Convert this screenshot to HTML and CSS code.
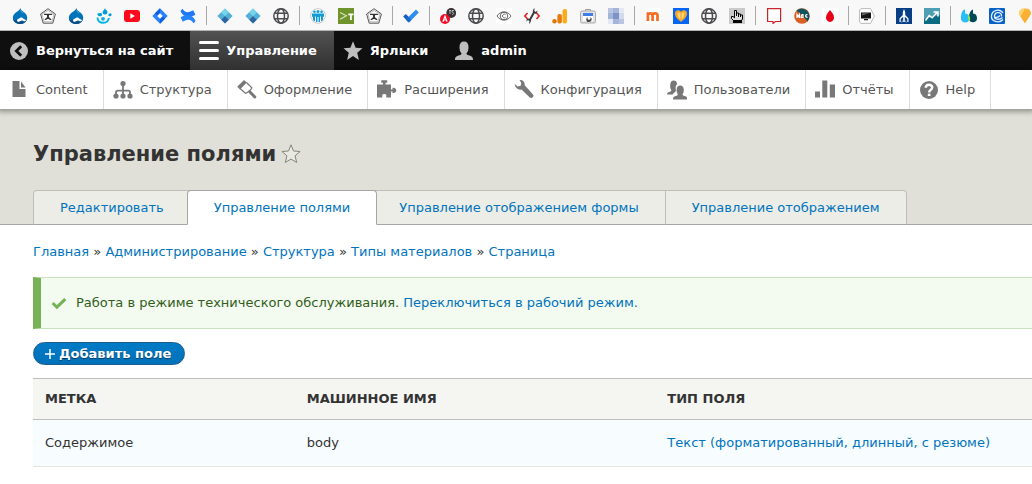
FILE: index.html
```html
<!DOCTYPE html>
<html lang="ru">
<head>
<meta charset="utf-8">
<title>Управление полями</title>
<link rel="stylesheet" href="styles.css">
</head>
<body>
<svg class="defs" aria-hidden="true">
  <defs>
    <symbol id="drop" viewBox="0 0 16 16">
      <path fill="#0073ba" d="M8.200 0C8.700 2.200 10.600 3 12.400 4.400 14.300 5.900 15.300 7.700 15.200 9.800 15 13.400 12 16 8 16 3.900 16 .900 13.300.900 9.700c0-2.200 1.200-4 3.200-5.400C6 3 7.700 2.200 8.200 0z"/>
      <path fill="#0b4f86" d="M1 10.500c1.500 2 3.500 2 5.500.5 2-1.300 4-1 5.500.5 1.500 1.200 2.300.5 3-1.500-.6 4-3 6-7 6s-6.400-2.500-7-5.500z"/>
      <path fill="#fff" d="M7 10.500c2-1.700 3.300-.8 4.500.2 1.200.9 2.200.6 2.300 1.300.1 1.400-1.300 1.700-2.600.9-1-.6-1.600-.6-2.700.2C7 14.200 5 13.800 5 12.400c0-.9.900-1.200 2-1.900z"/>
      <path fill="#5fb3e4" d="M8.300 1.500c.5 2 2.700 2.600 4 3.900-2-.2-4-1.300-4-3.900z"/>
    </symbol>
    <symbol id="drop-ring" viewBox="0 0 16 16">
      <g fill="#009cde"><path d="M9 0c.3 1.800 2.500 2.300 2.500 4.200A2.500 2.500 0 0 1 9 6.600C7.500 6.600 6.600 5.600 6.600 4.300 6.600 2.500 8.600 1.900 9 0z"/><path d="M1 5.500C2.600 6 4 4.300 5.500 5.300c.8.800.8 1.800.1 2.400-1 .8-2.500.7-3.400 0C1.300 7 2 6.300 1 5.500z"/><path d="M14.800 5c.3.700 1.200 1.600.6 2.600-.6.900-2 .9-2.700.2-.6-.7-.4-1.700.5-2 .8-.2 1.200-.3 1.600-.8z"/></g>
      <path fill="none" stroke="#00b4e3" stroke-width="2" d="M1.500 9.500c0 3.300 2.600 5.300 5.600 5.300 2.900 0 5.400-1.600 5.700-4.800"/>
      <circle cx="7" cy="10.800" r="1.900" fill="#12a9e0"/>
    </symbol>
    <symbol id="pentagon" viewBox="0 0 16 16">
      <path fill="#fff" stroke="#444" stroke-width=".9" stroke-linejoin="round" d="M8 .7 15.400 6 12.800 15.200H3.200L.600 6z"/>
      <path fill="none" stroke="#888" stroke-width=".6" d="M2 6 8 2.500 14 6l-2 7.800H4z"/>
      <path fill="#333" d="M4 5.800h8.200v1.100H9.300c-.6 1-.6 2 .2 2.900.9.900 1.700 1.300 2 2.200H9.900c-.4-.6-1-1-1.900-1s-1.500.4-1.900 1H4.500c.3-.9 1.100-1.300 2-2.200.8-.9.800-1.900.2-2.900H4z"/>
    </symbol>
    <symbol id="globe" viewBox="0 0 16 16">
      <g fill="none" stroke="#4c4c4f" stroke-width="1.500"><circle cx="8" cy="8" r="7.200"/><ellipse cx="8" cy="8" rx="3.500" ry="7.200"/><path d="M1.500 5.300h13M1.500 10.700h13"/></g>
    </symbol>
    <symbol id="diamond" viewBox="0 0 16 16">
      <path fill="#65c8e4" d="M8 .5 15.500 8 8 15.500.500 8z"/><path fill="#4d9fce" d="M11.800 4.200 15.500 8l-3.700 3.800L8 8zM4.200 4.200 8 8l-3.800 3.800L.500 8z" opacity=".6"/><path fill="#77d5ea" d="m8 .5 3.800 3.700L8 8 4.200 4.200z"/><path fill="#2e66a3" d="m8 8 3.800 3.800L8 15.500l-3.800-3.700z"/>
    </symbol>
  </defs>
</svg>

<nav class="bookmarks" aria-label="Закладки">
  <a href="#" aria-label="Drupal"><svg><use href="#drop"/></svg></a>
  <a href="#" aria-label="Форж"><svg><use href="#pentagon"/></svg></a>
  <a href="#" aria-label="Drupal.org"><svg><use href="#drop"/></svg></a>
  <a href="#" aria-label="Drupal 8"><svg><use href="#drop-ring"/></svg></a>
  <a href="#" aria-label="YouTube"><svg viewBox="0 0 16 16"><rect y="2" width="16" height="12" rx="3" fill="#ff0a1c"/><path fill="#fff" d="m6.300 5.300 4.600 2.700-4.600 2.700z"/></svg></a>
  <a href="#" aria-label="Jira"><svg viewBox="0 0 16 16"><path fill="#2684ff" d="m8 .3 7.700 7.700L8 15.700.300 8z"/><path fill="#0f5fe0" d="M8 .3v5L5.300 8 2.800 5.500zM8 15.700v-5L10.700 8l2.500 2.500z"/><path fill="#fff" d="M8 5.200 10.800 8 8 10.800 5.200 8z"/></svg></a>
  <a href="#" aria-label="Confluence"><svg viewBox="0 0 16 16"><path fill="#1f78fb" d="M2.500.7c2.500 4 5 4.600 10.700 1.600l2.200 4.500C8 11 3.500 9 .5 3.300c.4-1 1.100-2 2-2.600z"/><path fill="#2684ff" d="M13.500 15.300c-2.500-4-5-4.600-10.700-1.600L.6 9.200C8 5 12.500 7 15.500 12.700c-.4 1-1.100 2-2 2.600z"/></svg></a>
  <span class="sep"></span>
  <a href="#" aria-label="Проект"><svg><use href="#diamond"/></svg></a>
  <a href="#" aria-label="Проект 2"><svg><use href="#diamond"/></svg></a>
  <a href="#" aria-label="Сайт"><svg><use href="#globe"/></svg></a>
  <span class="sep"></span>
  <a href="#" aria-label="Команда"><svg viewBox="0 0 16 16"><path fill="#fff" stroke="#bbb" stroke-width=".8" d="M4 1.500 8 .6l4 .9L15 5l.3 4L12.500 14 8 15.400 3.500 14 .700 9 1 5z"/><g fill="#109bd3"><circle cx="8" cy="3.400" r="1.500"/><circle cx="4.500" cy="3.800" r="1.300"/><circle cx="11.500" cy="3.800" r="1.300"/><path d="M2 5.500h12v3l-1 .5v3l-2 1.500V8.500h-1V14H8.500V9h-1v5H6V8.500H5v5L3 12V9l-1-.5z"/></g></svg></a>
  <a href="#" aria-label="Терминал"><svg viewBox="0 0 16 16"><path fill="#70942c" d="M0 0h16v16H0z"/><path fill="none" stroke="#dbe6bd" stroke-width="1.100" d="m2 4.500 6.500 3.200L2 11.300"/><path fill="#fff" d="M10.300 5.500h5.200v1.700H13.800V12H12V7.200h-1.700z"/></svg></a>
  <a href="#" aria-label="Форж 2"><svg><use href="#pentagon"/></svg></a>
  <span class="sep"></span>
  <a href="#" aria-label="Задачи"><svg viewBox="0 0 16 16"><path fill="#195abd" d="m.200 8.500 2.600-2.600 5 5L5.300 14.300z"/><path fill="#2f8eed" d="M2.800 11.500 13 1.600l2.800 2.800L6 14.400z"/><path fill="#1868cd" d="m2.800 11.500 2.500-2.400 3 2.900L6 14.400z"/></svg></a>
  <span class="sep"></span>
  <a href="#" aria-label="Метрика"><svg viewBox="0 0 16 16"><circle cx="11.200" cy="5" r="4.900" fill="#333"/><circle cx="5" cy="11" r="5" fill="#f30b25"/><path fill="none" stroke="#fff" stroke-width="1.200" d="M2.900 13.700 5 8.200l2.100 5.500M3.600 12h2.800"/><path fill="none" stroke="#bbb" d="M9 2.500h2M10 2.500V6M14 2.500h-2v1.700c2-.4 2.500 2.500 0 2.300"/></svg></a>
  <a href="#" aria-label="Сайт 2"><svg><use href="#globe"/></svg></a>
  <a href="#" aria-label="Копирайт"><svg viewBox="0 0 16 16"><path fill="#fff" d="M0 0h16v16H0z"/><g fill="none" stroke="#555" stroke-width=".9"><path d="M1 8c3.500-5.500 10.500-5.500 14 0-3.500 5.500-10.500 5.500-14 0z"/><circle cx="8" cy="8" r="3.800"/><path d="M9.500 6.700c-1.400-1.200-3-.3-3 1.300s1.600 2.500 3 1.300"/></g></svg></a>
  <a href="#" aria-label="Инструменты"><svg viewBox="0 0 16 16"><path fill="none" stroke="#e2202e" stroke-width="1.600" d="M3.500 5 .9 8l2.600 3M12.500 5l2.600 3-2.600 3"/><path fill="none" stroke="#3a3a3a" stroke-width="2" d="m5.500 12.500 5-9"/><path fill="#3a3a3a" d="m10.700.300-.5 2.700 1.600 1 1.500-1.400c.3 2-.8 3.400-2.100 3.100L8.900 4C8.800 2 9.400.800 10.700.300zM5 15.800l.5-2.700-1.500-1-1.500 1.400c-.2-2 .8-3.300 2-3.100l2.400 1.700c.2 1.900-.6 3.100-1.900 3.700z"/></svg></a>
  <a href="#" aria-label="Аналитика"><svg viewBox="0 0 16 16"><rect x="10.500" y="1" width="4.500" height="14.500" rx="2" fill="#fbac18"/><rect x="5.400" y="6" width="4.500" height="9.500" rx="2" fill="#e87b0b"/><circle cx="2.500" cy="13.200" r="2.200" fill="#e37400"/></svg></a>
  <a href="#" aria-label="Консоль"><svg viewBox="0 0 16 16"><path fill="none" stroke="#999" d="M5.500 3V1.500h5V3"/><rect x=".5" y="3" width="15" height="12" rx="1.500" fill="#e2e2e2" stroke="#aaa"/><path fill="#3f7ee8" d="M3 5h10v3H3z"/><path fill="#fff" d="M3 8h10v5H3z"/><path fill="#444" d="M7.500 9v2l1.500 1 1.500-1V9c2 1.500 1.500 4.500-1.500 5S5.500 10.500 7.500 9z"/></svg></a>
  <a href="#" aria-label="Пиксели"><svg viewBox="0 0 16 16"><path fill="#d3daeb" d="M0 0h16v16H0z"/><path fill="#a5b5d9" d="M5 0h6v5H5zM0 5h5v6H0zM5 11h6v5H5z"/><path fill="#b9c5e1" d="M0 0h5v5H0zM11 11h5v5h-5z"/><path fill="#7d95c6" d="M5 5h6v6H5z"/><path fill="#e3e8f3" d="M11 0h5v5h-5zM0 11h5v5H0z"/></svg></a>
  <span class="sep"></span>
  <a href="#" aria-label="Miro"><svg viewBox="0 0 16 16"><rect width="16" height="16" rx="2" fill="#fff"/><path fill="none" stroke="#f76b22" stroke-width="2.700" d="M2.900 13V4.300M2.900 7c0-2 4.700-2.300 4.700 0v6M7.600 7c0-2 4.900-2.300 4.900 0v6"/></svg></a>
  <a href="#" aria-label="Избранное"><svg viewBox="0 0 16 16"><path fill="#0464f3" d="M0 0h16v16H0z"/><path fill="#f4a82b" d="M8 14C5 11.500 2 9 2 5.500c0-3.300 4-4.300 6-1.600 2-2.700 6-1.700 6 1.600C14 9 11 11.500 8 14z"/><path fill="#fdd868" d="M8 12C6 10.500 4.500 8 4.500 5.500 5.800 4 7.500 4.300 8 5.500c.5-1.200 2.200-1.500 3.500 0C11.500 8 10 10.500 8 12z"/><path stroke="#eb8040" d="M8 4.500V12" stroke-width=".7"/></svg></a>
  <a href="#" aria-label="Сайт 3"><svg><use href="#globe"/></svg></a>
  <a href="#" aria-label="Курсор"><svg viewBox="0 0 16 16"><path fill="#cacaca" d="M0 0h16v16H0z"/><path fill="#ddd" stroke="#000" d="M4.500 12.500 2.500 10.500V8.500H4l1.500 1.300V2.500h2V5h2v1h2v1h2v4l-1 1.500z"/><path fill="#000" d="M4 12h9v3H4zM7 4.500h1V8H7zM9 5.500h1V9H9zM11 6.500h1V9h-1z"/></svg></a>
  <span class="sep"></span>
  <a href="#" aria-label="Сообщения"><svg viewBox="0 0 16 16"><path fill="#fff" stroke="#ca252c" stroke-width="1.200" d="M1.600.700h13V13.500H9.500L7 15.500V13.500H1.600z"/></svg></a>
  <a href="#" aria-label="МДС"><svg viewBox="0 0 16 16"><circle cx="8" cy="8" r="7.800" fill="#d95f25"/><path fill="#0e535f" d="M2.500 2.400a7.800 7.800 0 0 1 11 11L9 8z"/><path fill="none" stroke="#fff" stroke-width="1.200" d="M3 10V6.500l1.200 2 1.200-2V10M7 9l1-2.500h1V9M6.500 9.500h3M13.500 6.800c-2-1-3 2.400 0 2.500"/></svg></a>
  <a href="#" aria-label="Капля"><svg viewBox="0 0 16 16"><rect width="16" height="16" rx="2" fill="#fff"/><path fill="#e90014" d="M8 2c2.600 3 4 5.300 4 7.500S10.500 14 8 14s-4-2.300-4-4.500S5.400 5 8 2z"/></svg></a>
  <span class="sep"></span>
  <a href="#" aria-label="Экран"><svg viewBox="0 0 16 16"><path fill="#fff" stroke="#aaa" stroke-width=".8" d="M2 .6h9.500L15.400 8l-3.900 7.400H2L.600 14V2z"/><path fill="#161616" d="M2 4.500h10v6H2zM5 11h4v1.200H5z"/><path fill="#666" d="M3 5.300h7L3 7.500z"/></svg></a>
  <span class="sep"></span>
  <a href="#" aria-label="Башня"><svg viewBox="0 0 16 16"><path fill="#073f86" d="M0 0h16v16H0z"/><path fill="#fff" d="m8 1 1.200 3v3l3.300 3.500V14h-1.200v-3L8.800 8.800V14H7.200V8.800L4.700 11v3H3.500v-3.500L6.800 7V4z"/><path fill="none" stroke="#cad7e7" stroke-width=".8" d="M5.800 14.500C6 11.500 10 11.500 10.200 14.500"/></svg></a>
  <a href="#" aria-label="График"><svg viewBox="0 0 16 16"><path fill="#0b6b82" d="M0 0h16v16H0z"/><path fill="#4e9eb4" d="M0 0h16v7L0 11z"/><path fill="none" stroke="#fff" stroke-width="1.500" d="m1.500 12.500 3.700-5 3 2.300 5-5.500M9.500 4H14v4.500"/></svg></a>
  <span class="sep"></span>
  <a href="#" aria-label="Отзывы"><svg viewBox="0 0 16 16"><path fill="#27bdfb" d="M4 1.500v4c3.500.3 4.300 2.500 4.300 5 0 5.500-8.300 5-8.300 0C0 6 .800 2 4 1.500z"/><path fill="#004954" d="M12 1.500v4c3.300.3 4 2.500 4 5 0 5-7.500 5-8 .5C7.700 7 9 2 12 1.500z"/><path fill="#8be34f" d="M7 6.500c2.500 1.500 2.700 4.500 1.300 7C7 12 6.500 9 7 6.500z"/></svg></a>
  <a href="#" aria-label="Волна"><svg viewBox="0 0 16 16"><rect width="16" height="16" rx="1" fill="#0961c4"/><path fill="none" stroke="#dff0ff" stroke-width="1.300" d="M14 5C11 .5 3.500 1.500 2.500 7.500c-.8 6 7.500 8.500 11.500 4M12.500 8.500C13 4 6.500 3 5.500 7.500c-.7 4 4.500 5 8 2M5.500 9c2 .7 4 .2 5.500-1.500"/></svg></a>
  <a href="#" aria-label="Метка"><svg viewBox="0 0 16 16"><path fill="#fbb034" d="M8 .5c3.500 0 5.500 1.300 6 4.500 0 1.800-1.500 3.500-6 10.500C3.500 8.500 2 6.800 2 5 2.500 1.800 4.500.500 8 .500z"/><path fill="#ffd36c" d="M8 .5C4.500.500 2.500 1.800 2 5c0 1 .5 2 1.500 3.500z"/></svg></a>
</nav>

<header class="toolbar">
  <nav class="toolbar-bar" aria-label="Панель инструментов">
    <a class="bar-item" href="#"><svg class="icon" viewBox="0 0 20 20"><circle cx="10" cy="10" r="9" fill="#bfbfbf"/><path fill="none" stroke="#0f0f0f" stroke-width="2.800" d="m12.200 5.300-4.800 4.700 4.800 4.700"/></svg>Вернуться на сайт</a>
    <a class="bar-item is-active" href="#"><svg class="icon" viewBox="0 0 20 20"><path stroke="#fff" stroke-width="3" stroke-linecap="round" d="M1.500 1.500h17M1.500 9.500h17M1.500 17.500h17"/></svg>Управление</a>
    <a class="bar-item" href="#"><svg class="icon" viewBox="0 0 20 20"><path fill="#bebebe" d="m10 .300 2.600 6.500 6.900.5-5.300 4.500 1.700 7.200-5.900-3.900L4.100 19l1.700-7.200L.500 7.300l6.900-.5z"/></svg>Ярлыки</a>
    <a class="bar-item" href="#"><svg class="icon" viewBox="0 0 20 20"><path fill="#bebebe" d="M1 19c0-2.600.7-3.400 2.800-4.200 2.100-.7 3.600-.9 3.800-2.300C6.200 11.200 5.500 9 5.500 6 5.500 2.500 7 .500 10 .500s4.500 2 4.500 5.500c0 3-.7 5.200-2.100 6.500.2 1.400 1.700 1.600 3.800 2.300C18.300 15.600 19 16.400 19 19z"/></svg>admin</a>
  </nav>
  <nav class="tray" aria-label="Управление">
    <a class="tray-item" href="#"><svg class="icon" viewBox="0 0 20 20"><path fill="#787878" d="M3.500 1h7v8h6v8h-13zM12 1.500 16.500 7.500H12z"/></svg>Content</a>
    <a class="tray-item" href="#"><svg class="icon" viewBox="0 0 20 20"><circle cx="10" cy="3.500" r="2.600" fill="#787878"/><path fill="none" stroke="#787878" stroke-width="1.800" d="M10 5v11M3 16v-3.500c0-1.300.5-1.800 1.800-1.800h10.400c1.300 0 1.800.5 1.800 1.800V16"/><g fill="#787878"><circle cx="3" cy="16" r="2.600"/><circle cx="10" cy="16" r="2.600"/><circle cx="17" cy="16" r="2.600"/></g></svg>Структура</a>
    <a class="tray-item" href="#"><svg class="icon" viewBox="0 0 20 20"><path fill="#787878" d="M7 0 9.800 2.500 3 9.500.200 6.800z"/><path fill="none" stroke="#787878" stroke-width="1.300" d="m9.500 2.500 5.300 5.300c.4 1-5.300 6-6.300 5.500L3 8.500"/><path stroke="#787878" stroke-width="3" stroke-linecap="round" d="m13 12 4.800 5"/></svg>Оформление</a>
    <a class="tray-item" href="#"><svg class="icon" viewBox="0 0 20 20"><path fill="#787878" d="M0 4.500h6V2.800H4.300V.300h5.900v2.500H8.500v1.700H14v5h1.500V8c4-1.500 6 5.500 0 5v-1.500H14v6H9.300V16c1-2.800-5-2.800-4 0v1.500H0z"/></svg>Расширения</a>
    <a class="tray-item" href="#"><svg class="icon" viewBox="0 0 20 20"><path fill="#787878" d="M5.500.2c2.800-.7 5.600 1.600 5.200 5L19 14.500c1.500 2-1.300 4.500-3.200 3L7.500 9.500C4.500 10.300.9 7.700.7 4l3 2.400 3-.6.500-3z"/></svg>Конфигурация</a>
    <a class="tray-item" href="#"><svg class="icon" viewBox="0 0 20 20"><g fill="#787878"><path d="M0 14.500c0-2.300 1.500-2.300 3.500-3 .5-.2.800-.7.800-1.500C3 8.500 3 6 3.300 4 3.800 1.500 4.700.500 6.700.500s3 1 3.500 3.500C8.500 5.500 8.300 8 9 10.500 8.500 12.500 6 13 5.500 14.500z"/><path d="M6 19.500c0-2.500.7-3 2.800-3.600 1.500-.4 2-.7 2-1.700C9.700 13 9.500 11 9.700 9c.3-2.400 1.300-3.600 3.500-3.600S16.400 6.600 16.700 9c.2 2 0 4-1.100 5.200 0 1 .5 1.300 2 1.700 2 .6 2.700 1.100 2.700 3.600z"/></g></svg>Пользователи</a>
    <a class="tray-item" href="#"><svg class="icon" viewBox="0 0 20 20"><path fill="#787878" d="M0 11.500h5V17.500H0zM7.300.500h5v17h-5zM14.800 4.500H20v13h-5.200z"/></svg>Отчёты</a>
    <a class="tray-item" href="#"><svg class="icon" viewBox="0 0 20 20"><circle cx="10" cy="10" r="9" fill="#787878"/><path fill="none" stroke="#fff" stroke-width="2.500" d="M6.800 7.800c0-4 6.400-4 6.400-.4 0 2.500-3 2.200-3 5"/><path fill="#fff" d="M8.800 13.700h2.700v2.300H8.800z"/></svg>Help</a>
  </nav>
</header>

<div class="page-head">
  <div class="title-row">
    <h1>Управление полями</h1>
    <a class="star" href="#" aria-label="Добавить в ярлыки"><svg viewBox="0 0 20 20"><path fill="#e9e9e3" stroke="#85857a" stroke-linejoin="round" d="m10 .8 2.500 6.200 6.600.5-5 4.300 1.600 6.700L10 15.100l-5.700 3.400 1.600-6.700-5-4.300 6.600-.5z"/></svg></a>
  </div>
  <nav class="tabs" aria-label="Вкладки">
    <a class="tab" href="#">Редактировать</a>
    <a class="tab is-active" href="#" aria-current="page">Управление полями</a>
    <a class="tab" href="#">Управление отображением формы</a>
    <a class="tab" href="#">Управление отображением</a>
  </nav>
</div>

<main class="content">
  <nav class="breadcrumb" aria-label="Строка навигации"><a href="#">Главная</a> » <a href="#">Администрирование</a> » <a href="#">Структура</a> » <a href="#">Типы материалов</a> » <a href="#">Страница</a></nav>
  <div class="message" role="status">
    <svg viewBox="0 0 16 16" aria-hidden="true"><path fill="none" stroke="#73b355" stroke-width="3" d="m1.700 8 4.200 4.200 8.400-8"/></svg>
    <p>Работа в режиме технического обслуживания. <a href="#">Переключиться в рабочий режим.</a></p>
  </div>
  <a class="button" href="#"><svg viewBox="0 0 10 10" aria-hidden="true"><path stroke="#fff" stroke-width="1.500" d="M5 0v10M0 5h10"/></svg>Добавить поле</a>
  <table>
    <colgroup><col class="col-label"><col class="col-name"><col></colgroup>
    <thead><tr><th scope="col">Метка</th><th scope="col">Машинное имя</th><th scope="col">Тип поля</th></tr></thead>
    <tbody><tr><td>Содержимое</td><td>body</td><td><a href="#">Текст (форматированный, длинный, с резюме)</a></td></tr></tbody>
  </table>
</main>
</body>
</html>
```
FILE: styles.css
```css
* { box-sizing: border-box; }
body {
  margin: 0;
  background: #fff;
  color: #333;
  font: 13px/20px "DejaVu Sans", sans-serif;
  overflow-x: hidden;
}
a { color: #0074bd; text-decoration: none; }
.defs { display: none; }

.bookmarks {
  display: flex;
  align-items: center;
  height: 31px;
  padding: 1px 0 0 12px;
  background: #f8f8f8;
  border-bottom: 1px solid #b4b4b4;
  overflow: hidden;
}
.bookmarks a { flex: none; width: 16px; height: 16px; margin-right: 12px; }
.bookmarks svg { display: block; width: 16px; height: 16px; }
.sep { flex: none; width: 1px; height: 19px; margin: 0 10px 0 -2px; background: #a8a8a8; }

.toolbar { position: relative; z-index: 2; }
.toolbar-bar { display: flex; background: #0f0f0f; }
.bar-item, .tray-item {
  display: flex;
  align-items: center;
  gap: 7px;
  height: 39px;
  padding: 1px 17px 0 9px;
  line-height: 22px;
  white-space: nowrap;
}
.bar-item { color: #fff; font-weight: bold; }
.bar-item.is-active { background: linear-gradient(#525252, #303030); }
.icon { flex: none; width: 20px; height: 20px; }
.tray {
  display: flex;
  background: #fff;
  border-bottom: 1px solid #a3a39f;
  box-shadow: 0 0 5px 2px rgba(0, 0, 0, 0.33);
}
.tray-item {
  padding-right: 15px;
  color: #565656;
  border-right: 1px solid #ddd;
}

.page-head {
  padding: 34px 33px 0;
  background: #e0e0d8;
  border-bottom: 1px solid #a6a6a6;
}
.title-row { display: flex; align-items: center; gap: 5px; height: 20px; }
h1 { margin: 0; font-size: 21px; line-height: 20px; white-space: nowrap; }
.star svg { display: block; width: 20px; height: 20px; }
.tabs { display: flex; margin: 26px 0 -1px; }
.tab {
  height: 35px;
  padding: 7px 26px;
  border: 1px solid #bfbfba;
  border-bottom-color: #a6a6a6;
  background: #ecede7;
  white-space: nowrap;
}
.tab + .tab { margin-left: -1px; }
.tab:first-child { border-top-left-radius: 4px; }
.tab:last-child { border-top-right-radius: 4px; }
.tabs .tab.is-active {
  position: relative;
  z-index: 1;
  margin: 0 -4px;
  border-color: #a6a6a6;
  border-bottom-color: #fff;
  border-radius: 4px 4px 0 0;
  background: #fff;
}

.content { padding: 17px 0 17px 33px; }
.message {
  display: flex;
  align-items: center;
  gap: 9px;
  height: 52px;
  margin: 15px 0 13px;
  padding-left: 10px;
  border: solid #c9e1bd;
  border-width: 1px 0;
  border-left: 8px solid #77b259;
  background: #f3faef;
  color: #325e1c;
}
.message svg { width: 16px; height: 16px; }
.message p { margin: 0; }
.button {
  display: inline-flex;
  align-items: center;
  gap: 4px;
  height: 23px;
  padding: 0 13px 0 11px;
  border: 1px solid #1e5c90;
  border-radius: 12px;
  background: linear-gradient(#007bc6, #0071b8);
  color: #fff;
  font-weight: bold;
  text-shadow: 0 1px 1px rgba(0, 0, 0, 0.5);
  vertical-align: top;
}
.button svg { width: 10px; height: 10px; }
table {
  width: 100%;
  margin-top: 13px;
  table-layout: fixed;
  border-collapse: collapse;
  text-align: left;
}
.col-label { width: 26.2%; }
.col-name { width: 36.1%; }
th {
  padding: 10px 12px;
  border: solid #bebfb9;
  border-width: 1px 0;
  background: #f5f5f2;
  text-transform: uppercase;
}
td {
  padding: 13px 12px;
  border-bottom: 1px solid #e6e4df;
  background: #f7fcff;
}
```
